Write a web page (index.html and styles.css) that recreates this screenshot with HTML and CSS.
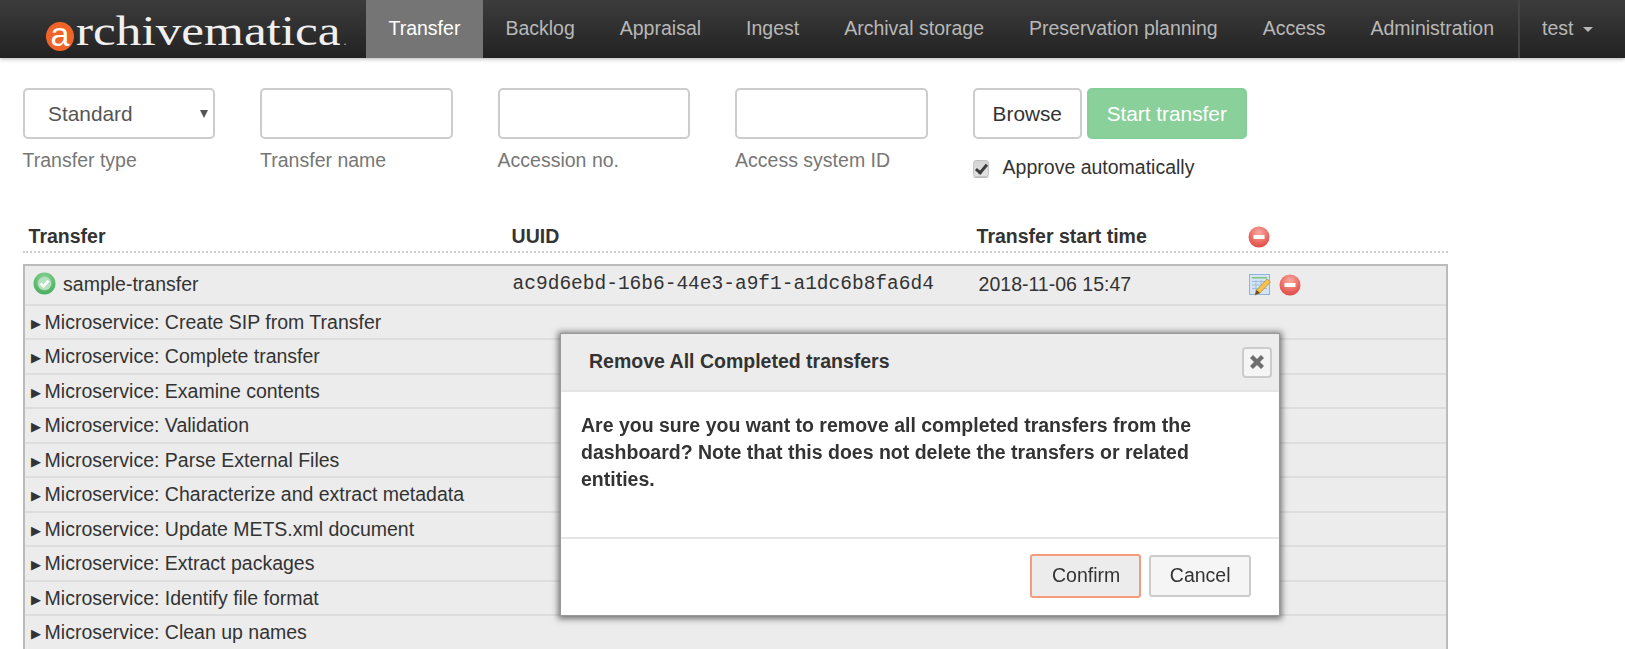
FILE: index.html
```html
<!DOCTYPE html>
<html lang="en">
<head>
    <meta charset="UTF-8">
    <title>Archivematica Dashboard - Transfer</title>
    <link rel="stylesheet" href="styles.css">
</head>
<body>
    <header class="navbar">
        <a class="brand" href="#"><span class="brand-a">a</span><span class="brand-text">rchivematica<span class="brand-dot">.</span></span></a>
        <nav class="nav-links">
            <a class="nav-item active" href="#">Transfer</a>
            <a class="nav-item" href="#">Backlog</a>
            <a class="nav-item" href="#">Appraisal</a>
            <a class="nav-item" href="#">Ingest</a>
            <a class="nav-item" href="#">Archival storage</a>
            <a class="nav-item" href="#">Preservation planning</a>
            <a class="nav-item" href="#">Access</a>
            <a class="nav-item" href="#">Administration</a>
        </nav>
        <a class="nav-item nav-user" href="#">test <span class="caret"></span></a>
    </header>

    <main class="content">
        <form class="transfer-form">
            <div class="field">
                <div class="select-wrap">
                    <select class="control select-control">
                        <option>Standard</option>
                    </select>
                </div>
                <label class="field-label">Transfer type</label>
            </div>
            <div class="field">
                <input class="control" type="text">
                <label class="field-label">Transfer name</label>
            </div>
            <div class="field">
                <input class="control" type="text">
                <label class="field-label">Accession no.</label>
            </div>
            <div class="field">
                <input class="control" type="text">
                <label class="field-label">Access system ID</label>
            </div>
            <div class="actions">
                <div class="buttons">
                    <button class="btn" type="button">Browse</button>
                    <button class="btn btn-success" type="button">Start transfer</button>
                </div>
                <label class="approve"><input type="checkbox" checked> Approve automatically</label>
            </div>
        </form>

        <div class="list-head row-grid">
            <span>Transfer</span>
            <span>UUID</span>
            <span>Transfer start time</span>
            <svg class="icon" viewBox="0 0 22 22"><use href="#remove-icon"/></svg>
        </div>

        <div class="transfer-box">
            <div class="transfer-row row-grid">
                <span class="transfer-name">
                    <svg class="icon status-icon" viewBox="0 0 22 22">
                        <circle cx="11" cy="11" r="10.5" fill="url(#green-fill)"/>
                        <circle cx="11" cy="11" r="6.5" fill="#b4e2bc"/>
                        <path d="M7.3 10.8l2.8 3 4.8-5.6" fill="none" stroke="#fff" stroke-width="2.4"/>
                    </svg>
                    sample-transfer
                </span>
                <span class="uuid">ac9d6ebd-16b6-44e3-a9f1-a1dc6b8fa6d4</span>
                <span class="start-time">2018-11-06 15:47</span>
                <span class="row-icons">
                    <svg class="icon" viewBox="0 0 22 22">
                        <rect x="0.5" y="0.5" width="20" height="20" fill="#d5e4f5" stroke="#8db4de"/>
                        <rect x="3" y="3" width="15" height="1.5" fill="#7cc47f"/>
                        <path d="M3 7.5h15M3 11h15M3 14.5h15M7 6v12M12 6v12" stroke="#9dbde2" fill="none"/>
                        <path d="M6 21l1.5-5L18 5l3.5 3L11 19z" fill="#f2c14e" stroke="#b9892c" stroke-width="0.7"/>
                        <path d="M6 21l1.5-5 3.5 3z" fill="#6e4a24"/>
                    </svg>
                    <svg class="icon" viewBox="0 0 22 22"><use href="#remove-icon"/></svg>
                </span>
            </div>
            <div class="service-row">Microservice: Create SIP from Transfer</div>
            <div class="service-row">Microservice: Complete transfer</div>
            <div class="service-row">Microservice: Examine contents</div>
            <div class="service-row">Microservice: Validation</div>
            <div class="service-row">Microservice: Parse External Files</div>
            <div class="service-row">Microservice: Characterize and extract metadata</div>
            <div class="service-row">Microservice: Update METS.xml document</div>
            <div class="service-row">Microservice: Extract packages</div>
            <div class="service-row">Microservice: Identify file format</div>
            <div class="service-row">Microservice: Clean up names</div>
        </div>
    </main>

    <div class="modal">
        <div class="modal-header">
            <h3>Remove All Completed transfers</h3>
            <button class="modal-close" type="button">
                <svg viewBox="0 0 16 16" width="16" height="16"><path d="M1 4l3-3 4 4 4-4 3 3-4 4 4 4-3 3-4-4-4 4-3-3 4-4z" fill="#6f6f6f"/></svg>
            </button>
        </div>
        <div class="modal-body">Are you sure you want to remove all completed transfers from the dashboard? Note that this does not delete the transfers or related entities.</div>
        <div class="modal-footer">
            <button class="btn-modal btn-confirm" type="button">Confirm</button>
            <button class="btn-modal" type="button">Cancel</button>
        </div>
    </div>

    <svg class="icon-defs" width="0" height="0">
        <defs>
            <radialGradient id="red-fill" cx="50%" cy="30%" r="70%">
                <stop offset="0" stop-color="#fbaaa0"/>
                <stop offset="1" stop-color="#e04a44"/>
            </radialGradient>
            <radialGradient id="green-fill" cx="50%" cy="30%" r="70%">
                <stop offset="0" stop-color="#8fd69b"/>
                <stop offset="1" stop-color="#47ad5c"/>
            </radialGradient>
            <g id="remove-icon">
                <circle cx="11" cy="11" r="10.5" fill="url(#red-fill)"/>
                <rect x="5.5" y="9" width="11" height="4" rx="0.5" fill="#fff"/>
            </g>
        </defs>
    </svg>
</body>
</html>
```

FILE: styles.css
```css
html, body {
    height: 100%;
    overflow: hidden;
}
body {
    margin: 0;
    font-family: "Liberation Sans", Arial, sans-serif;
    font-size: 19.5px;
    line-height: 1.42857;
    color: #333;
    background-color: #fff;
}
a {
    text-decoration: none;
}

/* top bar */
.navbar {
    display: flex;
    height: 58px;
    background: linear-gradient(to bottom, #3c3c3c, #222);
    box-shadow: 0 1px 4px rgba(0, 0, 0, 0.3);
}
.brand {
    width: 366px;
    box-sizing: border-box;
    padding: 6px 0 0 46px;
    font-family: "Liberation Serif", serif;
    font-size: 42px;
    line-height: 50px;
    color: #f0f0f0;
    white-space: nowrap;
}
.brand-a {
    display: inline-block;
    width: 28px;
    height: 29px;
    margin-right: 2px;
    border-radius: 50%;
    background-color: #f0642a;
    color: #fff;
    font-family: "Liberation Sans", sans-serif;
    font-size: 34px;
    line-height: 25px;
    text-align: center;
    vertical-align: -1px;
}
.brand-text {
    display: inline-block;
    transform: scaleX(1.22);
    transform-origin: left;
}
.brand-dot {
    margin-left: 2px;
    font-size: 13px;
    color: #999;
}
.nav-links {
    display: flex;
}
.nav-item {
    padding: 0 22.5px;
    line-height: 57px;
    color: #b8b8b8;
}
.nav-item.active {
    background-color: #757575;
    color: #fff;
}
.nav-user {
    margin-left: 1px;
    border-left: 2px solid #444;
}
.caret {
    display: inline-block;
    margin-left: 4px;
    border-top: 5px solid #b8b8b8;
    border-left: 5px solid transparent;
    border-right: 5px solid transparent;
    vertical-align: middle;
}

/* form */
.content {
    padding: 30px 177px 0 22.6px;
}
.transfer-form {
    display: flex;
    gap: 45px;
    height: 129px;
}
.field {
    width: 192.5px;
}
.control {
    display: block;
    box-sizing: border-box;
    width: 100%;
    height: 51px;
    padding: 0 23.5px;
    border: 2px solid #ccc;
    border-radius: 5px;
    background-color: #fff;
    font: inherit;
    font-size: 20.8px;
    color: #555;
}
.select-wrap {
    position: relative;
}
.select-wrap::after {
    content: "";
    position: absolute;
    top: 22px;
    right: 7px;
    border-top: 8px solid #555;
    border-left: 4px solid transparent;
    border-right: 4px solid transparent;
}
.select-control {
    appearance: none;
}
.field-label {
    display: block;
    margin-top: 8px;
    color: #777;
}
.buttons {
    display: flex;
    gap: 5.5px;
}
.btn {
    box-sizing: border-box;
    height: 51px;
    padding: 0 18px;
    border: 2px solid #ccc;
    border-radius: 5px;
    background-color: #fff;
    font: inherit;
    font-size: 20.8px;
    color: #333;
}
.btn-success {
    padding: 0 18.2px 0 17.2px;
    border-color: #84cf97;
    background-color: #8ad09a;
    color: #fff;
}
.approve {
    display: flex;
    align-items: center;
    gap: 14px;
    margin-top: 15px;
}
.approve input {
    appearance: none;
    position: relative;
    box-sizing: border-box;
    width: 16px;
    height: 17px;
    margin: 2px 0 0;
    border: 1px solid #c4c4c4;
    border-radius: 3px;
    background: linear-gradient(to bottom, #d4d4d4, #e2e2e2);
    box-shadow: 0 1px 0 #bbb;
}
.approve input::after {
    content: "";
    position: absolute;
    top: 1px;
    left: 4px;
    width: 4px;
    height: 9px;
    border-right: 3px solid #3c3c3c;
    border-bottom: 3px solid #3c3c3c;
    transform: rotate(40deg);
}

/* transfer list */
.row-grid {
    display: grid;
    align-items: center;
}
.list-head {
    height: 28px;
    padding: 6px 0 0 6px;
    grid-template-columns: 483px 465px 271px 1fr;
    border-bottom: 2px dotted #ccc;
    font-weight: bold;
}
.icon {
    display: block;
    width: 22px;
    height: 22px;
}
.transfer-box {
    margin-top: 11px;
    padding-bottom: 12px;
    border: 2px solid #bbb;
    background-color: #ececec;
}
.transfer-row {
    height: 38px;
    grid-template-columns: 487px 467px 270px 1fr;
}
.transfer-name {
    display: flex;
    align-items: center;
    gap: 7.5px;
    padding-left: 8px;
}
.status-icon {
    width: 23px;
    height: 23px;
    margin-top: -3px;
}
.uuid {
    padding-left: 1px;
    font-family: "Liberation Mono", monospace;
}
.row-icons {
    display: flex;
    gap: 8px;
}
.service-row {
    box-sizing: border-box;
    height: 34.45px;
    padding-left: 6px;
    border-top: 2px solid #ddd;
    line-height: 32px;
    white-space: nowrap;
}
.service-row::before {
    content: "\25B6";
    margin-right: 4px;
    font-size: 12.5px;
    vertical-align: 1px;
}

/* modal */
.modal {
    position: fixed;
    top: 333px;
    left: 560px;
    width: 718px;
    border: 1px solid #999;
    background-color: #fff;
    box-shadow: 0 1px 6px 2px rgba(0, 0, 0, 0.5);
}
.modal-header {
    display: flex;
    align-items: center;
    justify-content: space-between;
    box-sizing: border-box;
    height: 58px;
    padding: 0 7px 0 28px;
    border-bottom: 2px solid #e5e5e5;
    background-color: #ececec;
}
.modal-header h3 {
    margin: 0;
    font-size: 19.5px;
    font-weight: bold;
}
.modal-close {
    display: flex;
    align-items: center;
    justify-content: center;
    box-sizing: border-box;
    width: 30px;
    height: 31px;
    padding: 0;
    border: 2px solid #ccc;
    border-radius: 4px;
    background-color: #f5f5f5;
}
.modal-body {
    box-sizing: border-box;
    height: 145px;
    padding: 20px 20px 0;
    font-weight: bold;
    line-height: 27px;
}
.modal-footer {
    display: flex;
    justify-content: flex-end;
    align-items: center;
    gap: 8.5px;
    box-sizing: border-box;
    height: 78px;
    padding: 0 28px 2px 0;
    border-top: 2px solid #e5e5e5;
}
.btn-modal {
    box-sizing: border-box;
    height: 42px;
    padding: 0 18.5px;
    border: 2px solid #ccc;
    border-radius: 3px;
    background-color: #f5f5f5;
    font: inherit;
    color: #333;
}
.btn-confirm {
    height: 44px;
    padding: 0 18.5px 0 20.5px;
    border-color: #f59b7e;
    background-color: #ececec;
}
.icon-defs {
    position: absolute;
}
```
